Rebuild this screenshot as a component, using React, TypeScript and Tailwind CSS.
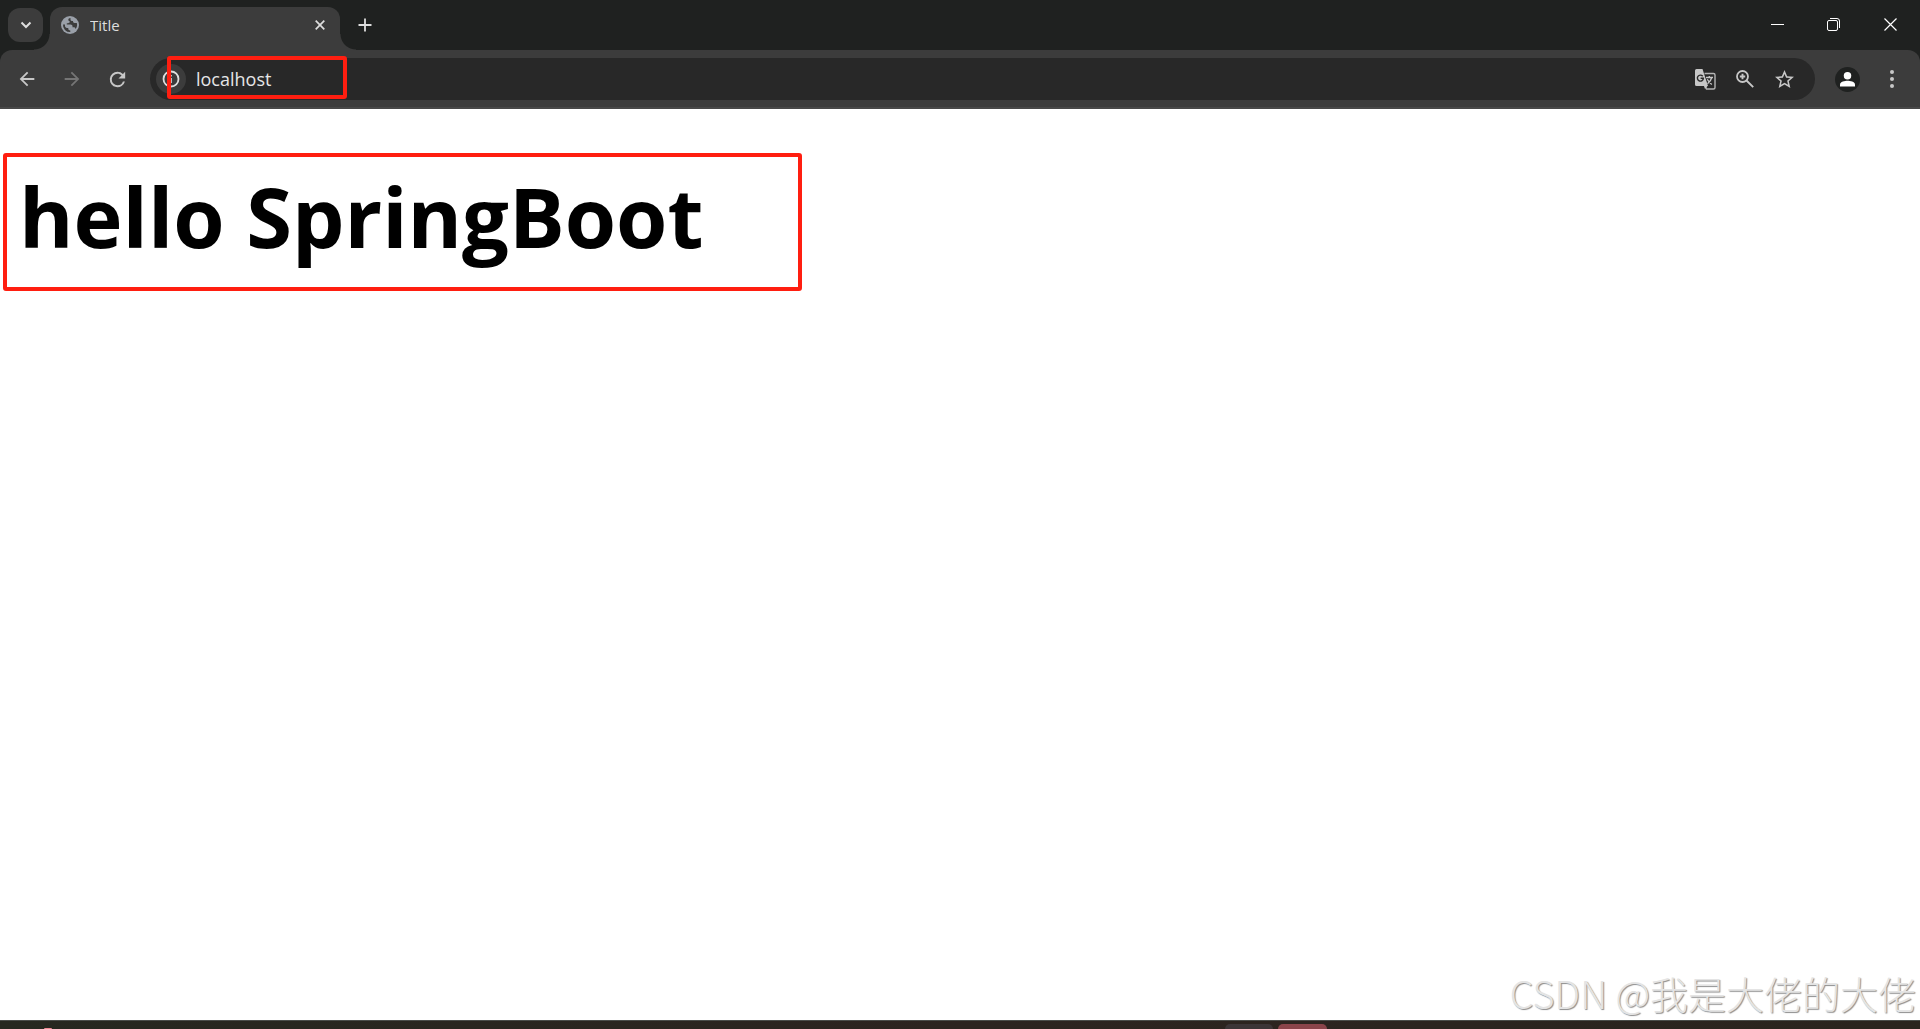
import type { ReactNode } from 'react';
import { clsx } from 'clsx';

type IconProperties = {
  className?: string;
};

const GlobeIcon = ({ className }: IconProperties) => (
  <svg viewBox="0 0 18 18" className={className} aria-hidden="true">
    <circle cx="9" cy="9" r="9" fill="#9aa0a9" />
    <path
      d="M9.500 1.900C8 2 7.300 2.800 7.300 3.800c0 .9.600 1.300 1.300 1.300v1c0 .8-.7 1.200-1.500 1.200H5.800v1.200h3.700c1.200 0 2 .8 2 1.800v.9h1.200c.9 0 1.500.5 1.700 1.200l.3.700A7.100 7.100 0 0 0 16.100 9c0-.8-.1-1.400-.3-2h-2.300c-.9 0-1.500-.6-1.500-1.400v-.7h-1.200c-.8 0-1.300-.6-1.300-1.300zM2 8.400A7.100 7.100 0 0 0 9.300 16.100v-1.600c-1.300 0-2-.8-2-1.700v-.9H6C4.800 11.900 4 11 4 10V8.400z"
      fill="#3c3c3c"
    />
  </svg>
);

const ChevronIcon = ({ className }: IconProperties) => (
  <svg viewBox="0 0 12 8" className={className} aria-hidden="true">
    <path
      d="m1.500 1.500 4.500 4.500 4.500-4.500"
      fill="none"
      stroke="currentColor"
      strokeWidth="2"
    />
  </svg>
);

const CrossIcon = ({ className }: IconProperties) => (
  <svg viewBox="0 0 10 10" className={className} aria-hidden="true">
    <path
      d="m.7.700 8.600 8.600M9.300.700.700 9.300"
      fill="none"
      stroke="currentColor"
      strokeWidth="1.700"
    />
  </svg>
);

const PlusIcon = ({ className }: IconProperties) => (
  <svg viewBox="0 0 14 14" className={className} aria-hidden="true">
    <path
      d="M7 .5v13M.5 7h13"
      fill="none"
      stroke="currentColor"
      strokeWidth="1.800"
    />
  </svg>
);

const ArrowIcon = ({ className }: IconProperties) => (
  <svg viewBox="0 0 24 24" className={className} aria-hidden="true">
    <path
      d="M20 11H7.830l5.590-5.590L12 4l-8 8 8 8 1.410-1.410L7.830 13H20v-2z"
      fill="currentColor"
    />
  </svg>
);

const ReloadIcon = ({ className }: IconProperties) => (
  <svg viewBox="0 0 24 24" className={className} aria-hidden="true">
    <path
      d="M17.650 6.350A7.958 7.958 0 0 0 12 4a8 8 0 1 0 7.730 10h-2.080A5.990 5.990 0 0 1 12 18a6 6 0 1 1 0-12c1.660 0 3.140.690 4.220 1.780L13 11h7V4l-2.350 2.350z"
      fill="currentColor"
    />
  </svg>
);

const InfoIcon = ({ className }: IconProperties) => (
  <svg viewBox="0 0 18 18" className={className} aria-hidden="true">
    <circle
      cx="9"
      cy="9"
      r="7.500"
      fill="none"
      stroke="currentColor"
      strokeWidth="1.800"
    />
    <path d="M8.200 8h1.600v5H8.200zM8.200 5h1.600v1.600H8.200z" fill="currentColor" />
  </svg>
);

const TranslateIcon = ({ className }: IconProperties) => (
  <svg viewBox="0 0 21 21" className={className} aria-hidden="true">
    <path
      d="M9.500 4.500h9a1.500 1.500 0 0 1 1.500 1.500v12.500a1.500 1.500 0 0 1-1.500 1.500h-7L10 16"
      fill="none"
      stroke="#b4b4b4"
      strokeWidth="1.400"
    />
    <path
      d="M1.500 0h6L13 17H1.500A1.500 1.500 0 0 1 0 15.500v-14A1.500 1.500 0 0 1 1.500 0zM9 17h3.500L10 20z"
      fill="#c7c7c7"
    />
    <path
      d="M7.700 7.200A3 3 0 1 0 8.400 9.300H5.600"
      fill="none"
      stroke="#2a2a2a"
      strokeWidth="1.400"
    />
    <path
      d="M11 8.500h7M14.300 7v1.500M16.700 8.500c-.6 3-2.200 4.800-4.200 6.200M12.300 10.200c1 2 2.400 3.600 4.500 5.300"
      fill="none"
      stroke="#c7c7c7"
      strokeWidth="1.300"
    />
  </svg>
);

const ZoomIcon = ({ className }: IconProperties) => (
  <svg viewBox="0 0 18 18" className={className} aria-hidden="true">
    <path
      d="m10.500 10.500 6.700 6.700M6.500 3.800v5.400M3.800 6.500h5.400"
      fill="none"
      stroke="currentColor"
      strokeWidth="1.900"
    />
    <circle
      cx="6.500"
      cy="6.500"
      r="5.500"
      fill="none"
      stroke="currentColor"
      strokeWidth="1.800"
    />
  </svg>
);

const StarIcon = ({ className }: IconProperties) => (
  <svg viewBox="2 2 20 19" className={className} aria-hidden="true">
    <path
      d="m22 9.240-7.190-.620L12 2 9.190 8.630 2 9.240l5.460 4.730L5.820 21 12 17.270 18.180 21l-1.630-7.030L22 9.240zM12 15.400l-3.760 2.270 1-4.280-3.320-2.880 4.380-.380L12 6.100l1.710 4.040 4.380.380-3.320 2.880 1 4.280L12 15.400z"
      fill="currentColor"
    />
  </svg>
);

const PersonIcon = ({ className }: IconProperties) => (
  <svg viewBox="0 0 16 16" className={className} aria-hidden="true">
    <circle cx="8" cy="4" r="4" fill="currentColor" />
    <path d="M0 15.500v-2.300c0-3 5.300-4 8-4s8 1 8 4v2.300z" fill="currentColor" />
  </svg>
);

const DotsIcon = ({ className }: IconProperties) => (
  <svg viewBox="0 0 4 18" className={className} aria-hidden="true">
    <circle cx="2" cy="2" r="2" fill="currentColor" />
    <circle cx="2" cy="9" r="2" fill="currentColor" />
    <circle cx="2" cy="16" r="2" fill="currentColor" />
  </svg>
);

const MinimizeIcon = ({ className }: IconProperties) => (
  <svg viewBox="0 0 13 13" className={className} aria-hidden="true">
    <path d="M0 6h13v1H0z" fill="currentColor" />
  </svg>
);

const RestoreIcon = ({ className }: IconProperties) => (
  <svg viewBox="0 0 13 13" className={className} aria-hidden="true">
    <rect
      x=".5"
      y="2.500"
      width="10"
      height="10"
      rx="1.500"
      fill="none"
      stroke="currentColor"
    />
    <path
      d="M3 .5h7A2.500 2.500 0 0 1 12.500 3v7"
      fill="none"
      stroke="currentColor"
    />
  </svg>
);

const CloseIcon = ({ className }: IconProperties) => (
  <svg viewBox="0 0 13 13" className={className} aria-hidden="true">
    <path d="m.5.500 12 12M12.500.500l-12 12" stroke="currentColor" strokeWidth="1.200" />
  </svg>
);

type IconButtonProperties = {
  label: string;
  className?: string;
  disabled?: boolean;
  children: ReactNode;
};

const IconButton = ({
  label,
  className,
  disabled,
  children,
}: IconButtonProperties) => (
  <button
    type="button"
    aria-label={label}
    disabled={disabled}
    className={clsx('flex shrink-0 items-center justify-center', className)}
  >
    {children}
  </button>
);

const TabStrip = () => (
  <div className="flex h-[50px] items-stretch bg-[#1f2120] pl-2 text-[#dedede]">
    <IconButton
      label="Search tabs"
      className="mt-2 h-[34px] w-[35px] rounded-xl bg-[#3c3c3c]"
    >
      <ChevronIcon className="h-2 w-3" />
    </IconButton>
    <div className="relative ml-[7px] mt-[7px] flex w-[290px] items-center rounded-t-xl bg-[#3c3c3c] pb-[7px] pl-[11px] pr-[15px]">
      <div className="absolute -left-4 bottom-0 size-4 bg-[radial-gradient(circle_at_0_0,transparent_15px,#3c3c3c_16px)]" />
      <div className="absolute -right-4 bottom-0 size-4 bg-[radial-gradient(circle_at_100%_0,transparent_15px,#3c3c3c_16px)]" />
      <GlobeIcon className="size-[18px]" />
      <span className="ml-[11px] flex-1 truncate text-[15px] leading-5">
        Title
      </span>
      <IconButton label="Close tab">
        <CrossIcon className="size-[10px]" />
      </IconButton>
    </div>
    <IconButton label="New tab" className="ml-[10px] w-[30px]">
      <PlusIcon className="size-[14px]" />
    </IconButton>
    <div className="ml-auto flex pb-px text-white">
      <IconButton label="Minimize" className="w-14">
        <MinimizeIcon className="size-[13px]" />
      </IconButton>
      <IconButton label="Restore" className="w-14">
        <RestoreIcon className="size-[13px]" />
      </IconButton>
      <IconButton label="Close" className="w-[59px]">
        <CloseIcon className="size-[13px]" />
      </IconButton>
    </div>
  </div>
);

const Toolbar = () => (
  <div className="bg-[#1f2120]">
    <div className="flex h-[59px] items-center rounded-t-xl border-b-2 border-[#484848] bg-[#3c3c3c] pt-px text-[#c7c7c7]">
      <IconButton label="Back" className="ml-[9px] w-9">
        <ArrowIcon className="size-[22px]" />
      </IconButton>
      <IconButton
        label="Forward"
        disabled
        className="ml-[9px] w-9 text-[#757575]"
      >
        <ArrowIcon className="size-[22px] rotate-180" />
      </IconButton>
      <IconButton label="Reload" className="ml-[9px] w-9">
        <ReloadIcon className="size-[23px]" />
      </IconButton>
      <div className="relative ml-[15px] flex h-[42px] flex-1 items-center rounded-full bg-[#282828] pl-[6px] pr-[21px]">
        <IconButton
          label="View site information"
          className="size-[30px] rounded-full bg-[#3c3c3c] text-[#dedede]"
        >
          <InfoIcon className="size-[18px]" />
        </IconButton>
        <input
          type="text"
          aria-label="Address"
          defaultValue="localhost"
          className="ml-[10px] min-w-0 flex-1 bg-transparent text-lg leading-6 text-[#e6e6e6] outline-none"
        />
        <div className="flex items-center gap-5">
          <IconButton label="Translate this page">
            <TranslateIcon className="size-[21px]" />
          </IconButton>
          <IconButton label="Zoom">
            <ZoomIcon className="size-[18px]" />
          </IconButton>
          <IconButton label="Bookmark this tab" className="ml-px">
            <StarIcon className="h-[18px] w-[19px]" />
          </IconButton>
        </div>
        <div className="pointer-events-none absolute -top-[2px] left-[17px] h-[43px] w-[180px] rounded-[3px] border-4 border-[#ff1e10]" />
      </div>
      <IconButton
        label="Profile"
        className="ml-5 size-[25px] rounded-full bg-[#1f2120] text-white"
      >
        <PersonIcon className="size-[15px]" />
      </IconButton>
      <IconButton label="Menu" className="ml-3 mr-2 w-10">
        <DotsIcon className="h-[18px] w-1" />
      </IconButton>
    </div>
  </div>
);

const Taskbar = () => (
  <div className="flex h-[9px] items-end overflow-hidden border-t border-[#4a4d4a] bg-linear-to-r from-[#262820] via-[#2c2420] to-[#2a241e]">
    <div className="ml-11 h-px w-2 rounded-t-full bg-[#f08a94]" />
    <div className="ml-auto mr-[5px] h-[5px] w-12 rounded-t-md bg-[#3b3537]" />
    <div className="mr-[593px] h-[5px] w-[49px] rounded-t-md bg-[#8a444a]" />
  </div>
);

export default function App() {
  return (
    <div className="flex h-screen flex-col overflow-hidden bg-white font-['Open_Sans','Noto_Sans',sans-serif]">
      <TabStrip />
      <Toolbar />
      <main className="relative flex-1 px-[3px] pt-11">
        <div className="w-[799px] max-w-full rounded-[3px] border-4 border-[#ff1e10] px-3 pb-[15px] pt-[3px]">
          <h1 className="whitespace-nowrap text-[83px] font-bold leading-[112px] text-black">
            hello SpringBoot
          </h1>
        </div>
        <p className="absolute bottom-1 right-1 whitespace-nowrap font-['Noto_Sans_CJK_SC',sans-serif] text-[38px] font-light leading-[46px] text-[#e4e4e4] [text-shadow:1px_1px_1px_#8c8c8c]">
          CSDN @我是大佬的大佬
        </p>
      </main>
      <Taskbar />
    </div>
  );
}
